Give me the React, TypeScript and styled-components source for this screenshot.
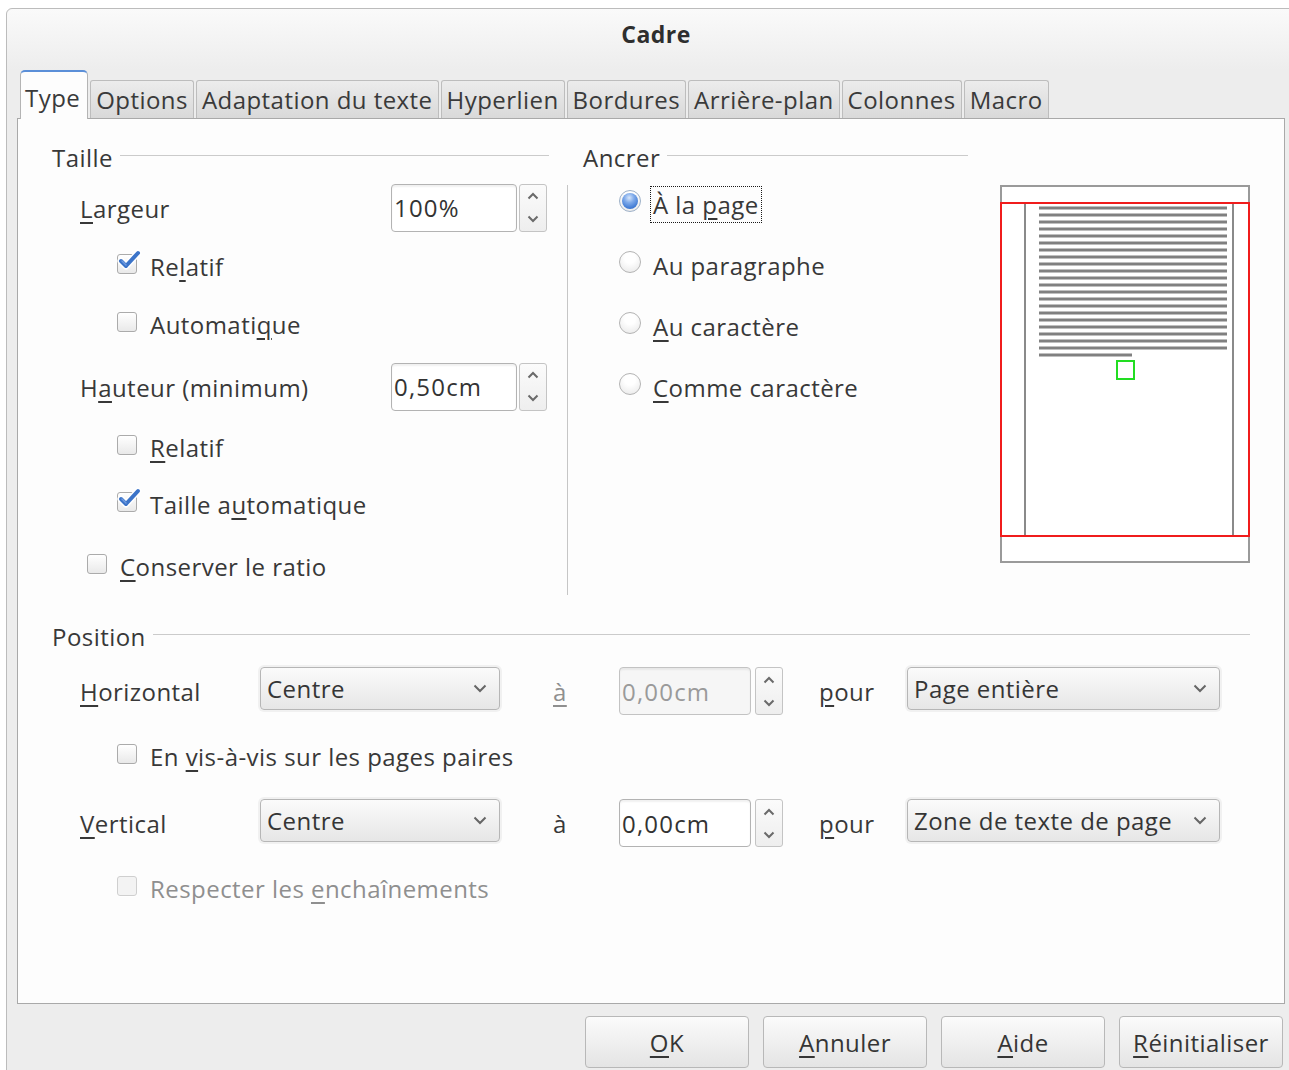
import React from "react";
import styled, { createGlobalStyle, css } from "styled-components";

const Global = createGlobalStyle`
  html, body {
    margin: 0;
    padding: 0;
    background: #ffffff;
    overflow: hidden;
  }
  body {
    font-family: "Open Sans", "Noto Sans", sans-serif;
    font-size: 24px;
    letter-spacing: 0.45px;
    color: #383838;
  }
`;

const Window = styled.div`
  box-sizing: border-box;
  margin: 8px 0 0 6px;
  width: 1300px;
  height: 1080px;
  background: #ededed;
  border: 1px solid #bcbcbc;
  border-radius: 6px 6px 0 0;
  display: flex;
  flex-direction: column;
`;

const TitleBar = styled.div`
  height: 61px;
  display: flex;
  align-items: center;
  justify-content: center;
  padding-bottom: 12px;
  box-sizing: border-box;
  background: linear-gradient(#fafafa, #ededed);
  border-radius: 6px 6px 0 0;
  font-weight: 700;
  font-size: 23px;
  color: #2e2e2e;
`;

const Body = styled.div`
  display: flex;
  flex-direction: column;
  padding-left: 10px;
  width: 1268px;
`;

const TabStrip = styled.div`
  height: 48px;
  display: flex;
  align-items: flex-end;
  gap: 2px;
  padding-left: 3px;
  position: relative;
  z-index: 1;
`;

const Tab = styled.div<{ $active?: boolean }>`
  box-sizing: border-box;
  height: 38px;
  padding: 0 5px;
  display: flex;
  align-items: center;
  border: 1px solid #bdbdbd;
  border-bottom: none;
  border-radius: 3px 3px 0 0;
  background: linear-gradient(#ececec, #d9d9d9);
  color: #3a3a3a;
  white-space: nowrap;
  ${(p) =>
    p.$active &&
    css`
      height: 49px;
      margin-bottom: -1px;
      padding: 4px 7px 0 4px;
      background: #fdfdfd;
      border-color: #b4b4b4;
      border-top: 2px solid #5b8fd8;
      border-radius: 5px 5px 0 0;
    `}
`;

const Panel = styled.div`
  box-sizing: border-box;
  height: 886px;
  background: #fdfdfd;
  border: 1px solid #a9a9a9;
  padding: 22px 34px 0 34px;
  display: flex;
  flex-direction: column;
`;

const TopSection = styled.div`
  display: flex;
  height: 454px;
`;

const Frame = styled.div<{ $width: number }>`
  width: ${(p) => p.$width}px;
  flex: none;
  display: flex;
  flex-direction: column;
`;

const FrameHeading = styled.div`
  height: 32px;
  display: flex;
  align-items: center;
  gap: 7px;
  &::after {
    content: "";
    flex: 1;
    height: 1px;
    margin-top: -3px;
    background: #cbcbcb;
  }
`;

const FieldRow = styled.div<{ $top: number }>`
  height: 48px;
  margin-top: ${(p) => p.$top}px;
  padding: 0 2px 0 28px;
  display: flex;
  align-items: center;
`;

const FieldLabel = styled.div`
  flex: 1;
`;

const CheckRow = styled.label<{ $top: number; $indent: number; $disabled?: boolean }>`
  height: 32px;
  margin-top: ${(p) => p.$top}px;
  padding-left: ${(p) => p.$indent}px;
  display: flex;
  align-items: center;
  gap: 13px;
  color: ${(p) => (p.$disabled ? "#8f8f8f" : "inherit")};
`;

const Box = styled.span<{ $disabled?: boolean }>`
  position: relative;
  box-sizing: border-box;
  width: 20px;
  height: 20px;
  margin-top: -4px;
  flex: none;
  border: 1px solid ${(p) => (p.$disabled ? "#cfcfcf" : "#ababab")};
  border-radius: 3px;
  background: ${(p) =>
    p.$disabled ? "#f3f3f3" : "linear-gradient(#ffffff, #e9e9e9)"};
  box-shadow: 0 1px 0 rgba(255, 255, 255, 0.8);
`;

const CheckMark = styled.svg`
  position: absolute;
  left: 0px;
  top: -5px;
  width: 22px;
  height: 22px;
  overflow: visible;
`;

const Key = styled.span`
  text-decoration: underline;
  text-decoration-thickness: 2px;
  text-underline-offset: 4px;
`;

const SpinBox = styled.div<{ $gap: number }>`
  display: flex;
  gap: ${(p) => p.$gap}px;
  height: 49px;
`;

const Entry = styled.div<{ $width: number; $disabled?: boolean }>`
  box-sizing: border-box;
  width: ${(p) => p.$width}px;
  height: 48px;
  border: 1px solid ${(p) => (p.$disabled ? "#c3c3c3" : "#b3b3b3")};
  border-radius: 4px;
  background: ${(p) => (p.$disabled ? "#f6f6f6" : "#ffffff")};
  box-shadow: inset 0 2px 2px rgba(0, 0, 0, 0.06);
  padding-left: 2px;
  display: flex;
  align-items: center;
  letter-spacing: 1.2px;
  color: ${(p) => (p.$disabled ? "#9a9a9a" : "#333333")};
`;

const Stepper = styled.div`
  box-sizing: border-box;
  width: 28px;
  height: 48px;
  border: 1px solid #c4c4c4;
  border-radius: 3px;
  background: linear-gradient(#fbfbfb, #eeeeee);
  display: flex;
  flex-direction: column;
  align-items: center;
  justify-content: space-around;
  color: #6a6a6a;
`;

const Separator = styled.div`
  width: 1px;
  flex: none;
  height: 410px;
  margin: 44px 0 0 18px;
  background: #c6c6c6;
`;

const AnchorFrame = styled(Frame)`
  margin-left: 15px;
`;

const RadioList = styled.div`
  display: flex;
  flex-direction: column;
  gap: 29px;
  margin-top: 15px;
`;

const RadioRow = styled.label`
  height: 32px;
  padding-left: 36px;
  display: flex;
  align-items: center;
  gap: 12px;
`;

const Radio = styled.span<{ $checked?: boolean }>`
  box-sizing: border-box;
  width: 22px;
  height: 22px;
  margin-top: -7px;
  flex: none;
  border-radius: 50%;
  border: 1px solid #b4b4b4;
  background: radial-gradient(circle at 50% 30%, #ffffff 30%, #e6e6e6 100%);
  display: flex;
  align-items: center;
  justify-content: center;
  ${(p) =>
    p.$checked &&
    css`
      border-color: #9eb1c8;
      &::after {
        content: "";
        width: 16px;
        height: 16px;
        border-radius: 50%;
        background: radial-gradient(
          circle at 45% 30%,
          #d7e6fb 0%,
          #7eaaea 35%,
          #3d78d2 75%,
          #2a5fb5 100%
        );
      }
    `}
`;

const FocusText = styled.span`
  outline: 1px dotted #1a1a1a;
  outline-offset: 1px;
  padding: 0 1px;
  margin-left: -1px;
`;

const Preview = styled.svg`
  margin: 44px 0 0 32px;
  width: 250px;
  height: 379px;
  flex: none;
`;

const PositionSection = styled.div`
  margin-top: 25px;
  display: flex;
  flex-direction: column;
`;

const PosRow = styled.div<{ $top: number }>`
  height: 49px;
  margin-top: ${(p) => p.$top}px;
  padding-left: 28px;
  display: flex;
  align-items: flex-start;
`;

const PosLabel = styled.div`
  width: 180px;
  line-height: 49px;
  height: 49px;
`;

const Combo = styled.div<{ $width: number }>`
  box-sizing: border-box;
  width: ${(p) => p.$width}px;
  height: 43px;
  padding: 0 12px 0 6px;
  border: 1px solid #b6b6b6;
  border-radius: 4px;
  background: linear-gradient(#fbfbfb, #e6e6e6);
  box-shadow: 0 0 0 2px #f1f1f1;
  display: flex;
  align-items: center;
  justify-content: space-between;
  white-space: nowrap;
  color: #353535;
`;

const Prep = styled.div<{ $gapBefore: number; $width: number; $disabled?: boolean }>`
  margin-left: ${(p) => p.$gapBefore}px;
  width: ${(p) => p.$width}px;
  line-height: 49px;
  height: 49px;
  color: ${(p) => (p.$disabled ? "#8f8f8f" : "inherit")};
`;

const ButtonRow = styled.div`
  margin-top: 12px;
  padding-right: 2px;
  display: flex;
  justify-content: flex-end;
  gap: 14px;
`;

const Button = styled.button`
  box-sizing: border-box;
  width: 164px;
  height: 52px;
  padding: 0;
  border: 1px solid #b8b8b8;
  border-radius: 4px;
  background: linear-gradient(#fbfbfb, #e4e4e4);
  font: inherit;
  letter-spacing: inherit;
  color: #353535;
  display: flex;
  align-items: center;
  justify-content: center;
`;

const Chevron = ({ up }: { up?: boolean }) => (
  <svg width="12" height="8" viewBox="0 0 12 8">
    <polyline
      points={up ? "1.5,6.5 6,2 10.5,6.5" : "1.5,1.5 6,6 10.5,1.5"}
      fill="none"
      stroke="currentColor"
      strokeWidth="2"
    />
  </svg>
);

const Check = ({ checked, disabled }: { checked?: boolean; disabled?: boolean }) => (
  <Box $disabled={disabled}>
    {checked && (
      <CheckMark viewBox="0 0 22 22">
        <path
          d="M3 11 L8 16 L20 3"
          fill="none"
          stroke="#ffffff"
          strokeWidth="7"
          strokeLinecap="round"
          strokeLinejoin="round"
        />
        <path
          d="M3 11 L8 16 L20 3"
          fill="none"
          stroke="#3c74c9"
          strokeWidth="4"
          strokeLinecap="round"
          strokeLinejoin="round"
        />
        <path
          d="M4 11 L8 15"
          fill="none"
          stroke="#6f9be0"
          strokeWidth="1.5"
          strokeLinecap="round"
        />
      </CheckMark>
    )}
  </Box>
);

const Spin = ({
  value,
  width,
  gap,
  disabled,
}: {
  value: string;
  width: number;
  gap: number;
  disabled?: boolean;
}) => (
  <SpinBox $gap={gap}>
    <Entry $width={width} $disabled={disabled}>
      {value}
    </Entry>
    <Stepper>
      <Chevron up />
      <Chevron />
    </Stepper>
  </SpinBox>
);

const Dropdown = ({ value, width }: { value: string; width: number }) => (
  <Combo $width={width}>
    <span>{value}</span>
    <svg width="14" height="9" viewBox="0 0 14 9">
      <polyline points="1.5,1.5 7,7 12.5,1.5" fill="none" stroke="#666" strokeWidth="2" />
    </svg>
  </Combo>
);

const tabs = [
  "Type",
  "Options",
  "Adaptation du texte",
  "Hyperlien",
  "Bordures",
  "Arrière-plan",
  "Colonnes",
  "Macro",
];

/* Miniature page: margins (grey), anchor area (red), body text and the frame (green). */
const PagePreview = () => {
  const lines = Array.from({ length: 21 }, (_, i) => 23 + i * 7);
  return (
    <Preview viewBox="0 0 250 379">
      <rect x="1" y="1" width="248" height="376" fill="#ffffff" stroke="#9a9a9a" strokeWidth="2" />
      <line x1="25" y1="18" x2="25" y2="351" stroke="#8a8a8a" strokeWidth="2" />
      <line x1="233" y1="18" x2="233" y2="351" stroke="#8a8a8a" strokeWidth="2" />
      {lines.map((y) => (
        <line key={y} x1="39" y1={y} x2="227" y2={y} stroke="#808080" strokeWidth="3" />
      ))}
      <line x1="39" y1="170" x2="132" y2="170" stroke="#808080" strokeWidth="3" />
      <rect x="1" y="18" width="248" height="333" fill="none" stroke="#f01c1c" strokeWidth="2" />
      <rect x="117" y="176" width="17" height="18" fill="none" stroke="#22dd22" strokeWidth="2" />
    </Preview>
  );
};

export default function App() {
  return (
    <>
      <Global />
      <Window>
        <TitleBar>Cadre</TitleBar>
        <Body>
          <TabStrip>
            {tabs.map((t, i) => (
              <Tab key={t} $active={i === 0}>
                {t}
              </Tab>
            ))}
          </TabStrip>
          <Panel>
            <TopSection>
              <Frame $width={497}>
                <FrameHeading>Taille</FrameHeading>
                <FieldRow $top={11}>
                  <FieldLabel>
                    <Key>L</Key>argeur
                  </FieldLabel>
                  <Spin value="100%" width={126} gap={2} />
                </FieldRow>
                <CheckRow $top={18} $indent={65}>
                  <Check checked />
                  <span>
                    Re<Key>l</Key>atif
                  </span>
                </CheckRow>
                <CheckRow $top={26} $indent={65}>
                  <Check />
                  <span>
                    Automati<Key>q</Key>ue
                  </span>
                </CheckRow>
                <FieldRow $top={23}>
                  <FieldLabel>
                    H<Key>a</Key>uteur (minimum)
                  </FieldLabel>
                  <Spin value="0,50cm" width={126} gap={2} />
                </FieldRow>
                <CheckRow $top={20} $indent={65}>
                  <Check />
                  <span>
                    <Key>R</Key>elatif
                  </span>
                </CheckRow>
                <CheckRow $top={25} $indent={65}>
                  <Check checked />
                  <span>
                    Taille a<Key>u</Key>tomatique
                  </span>
                </CheckRow>
                <CheckRow $top={30} $indent={35}>
                  <Check />
                  <span>
                    <Key>C</Key>onserver le ratio
                  </span>
                </CheckRow>
              </Frame>
              <Separator />
              <AnchorFrame $width={385}>
                <FrameHeading>Ancrer</FrameHeading>
                <RadioList>
                  <RadioRow>
                    <Radio $checked />
                    <FocusText>
                      À la <Key>p</Key>age
                    </FocusText>
                  </RadioRow>
                  <RadioRow>
                    <Radio />
                    <span>
                      Au para<Key>g</Key>raphe
                    </span>
                  </RadioRow>
                  <RadioRow>
                    <Radio />
                    <span>
                      <Key>A</Key>u caractère
                    </span>
                  </RadioRow>
                  <RadioRow>
                    <Radio />
                    <span>
                      <Key>C</Key>omme caractère
                    </span>
                  </RadioRow>
                </RadioList>
              </AnchorFrame>
              <PagePreview />
            </TopSection>
            <PositionSection>
              <FrameHeading>Position</FrameHeading>
              <PosRow $top={15}>
                <PosLabel>
                  <Key>H</Key>orizontal
                </PosLabel>
                <Dropdown value="Centre" width={240} />
                <Prep $gapBefore={53} $width={66} $disabled>
                  <Key>à</Key>
                </Prep>
                <Spin value="0,00cm" width={132} gap={4} disabled />
                <Prep $gapBefore={36} $width={88}>
                  <Key>p</Key>our
                </Prep>
                <Dropdown value="Page entière" width={313} />
              </PosRow>
              <CheckRow $top={24} $indent={65}>
                <Check />
                <span>
                  En <Key>v</Key>is-à-vis sur les pages paires
                </span>
              </CheckRow>
              <PosRow $top={27}>
                <PosLabel>
                  <Key>V</Key>ertical
                </PosLabel>
                <Dropdown value="Centre" width={240} />
                <Prep $gapBefore={53} $width={66}>
                  à
                </Prep>
                <Spin value="0,00cm" width={132} gap={4} />
                <Prep $gapBefore={36} $width={88}>
                  <Key>p</Key>our
                </Prep>
                <Dropdown value="Zone de texte de page" width={313} />
              </PosRow>
              <CheckRow $top={24} $indent={65} $disabled>
                <Check disabled />
                <span>
                  Respecter les <Key>e</Key>nchaînements
                </span>
              </CheckRow>
            </PositionSection>
          </Panel>
          <ButtonRow>
            <Button>
              <span>
                <Key>O</Key>K
              </span>
            </Button>
            <Button>
              <span>
                <Key>A</Key>nnuler
              </span>
            </Button>
            <Button>
              <span>
                <Key>A</Key>ide
              </span>
            </Button>
            <Button>
              <span>
                <Key>R</Key>éinitialiser
              </span>
            </Button>
          </ButtonRow>
        </Body>
      </Window>
    </>
  );
}
